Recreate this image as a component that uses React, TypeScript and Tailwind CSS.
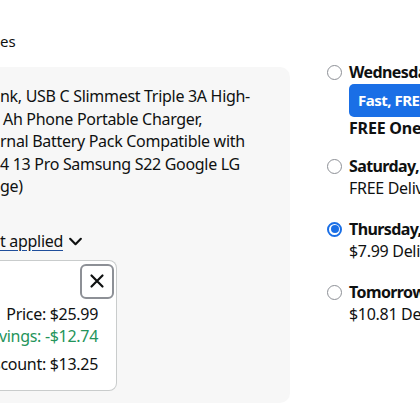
import React from "react";

const font = { fontFamily: '"Noto Sans", "Open Sans", Arial, sans-serif' };

function Radio({ checked }: { checked?: boolean }) {
  return checked ? (
    <span className="flex h-[15px] w-[15px] shrink-0 items-center justify-center rounded-full border-[2px] border-[#1a6fe6] bg-white">
      <span className="h-[8px] w-[8px] rounded-full bg-[#1a6fe6]" />
    </span>
  ) : (
    <span className="h-[15px] w-[15px] shrink-0 rounded-full border-[1.5px] border-[#8d9096] bg-white" />
  );
}

function Option({
  checked,
  title,
  children,
}: {
  checked?: boolean;
  title: string;
  children: React.ReactNode;
}) {
  return (
    <div className="flex gap-[7px]">
      <div className="flex h-[22px] items-center">
        <Radio checked={checked} />
      </div>
      <div className="flex flex-col whitespace-nowrap tracking-[-0.3px]">
        <div className="text-[16px] font-bold leading-[22px] tracking-[-0.6px]">{title}</div>
        {children}
      </div>
    </div>
  );
}

export default function App() {
  return (
    <div
      className="flex h-[420px] w-[420px] overflow-hidden bg-white text-[#0f1111]"
      style={font}
    >
      {/* left column */}
      <div className="flex w-[290px] shrink-0 flex-col pt-[30px]">
        <div className="text-[15px] leading-[22px]">es</div>
        <div className="mt-[15px] flex h-[336px] flex-col rounded-r-[10px] bg-[#f7f7f7] pt-[18px]">
          <div className="whitespace-nowrap text-[16px] leading-[22.5px] tracking-[-0.3px]">
            <div>nk, USB C Slimmest Triple 3A High-</div>
            <div className="pl-[3px]">Ah Phone Portable Charger,</div>
            <div>rnal Battery Pack Compatible with</div>
            <div>4 13 Pro Samsung S22 Google LG</div>
            <div>ge)</div>
          </div>
          <div className="mt-[32px] flex items-center gap-[5px] text-[16px] leading-[22px] tracking-[-0.3px]">
            <span className="underline decoration-[#1f4e9c] underline-offset-[3px]">
              t applied{" "}
            </span>
            <svg width="15" height="15" viewBox="0 0 14 14" className="mt-[2px]">
              <path
                d="M2 4.5 L7 9.5 L12 4.5"
                fill="none"
                stroke="#0f1111"
                strokeWidth="2"
                strokeLinecap="round"
                strokeLinejoin="round"
              />
            </svg>
          </div>
          <div className="mt-[8px] flex h-[131px] w-[117px] flex-col items-end rounded-r-[8px] border border-l-0 border-[#c9cccc] bg-white pr-[18px] pt-[3px]">
            <button className="-mr-[16px] flex h-[35px] w-[34px] items-center justify-center rounded-[6px] border-[2px] border-[#8d9096] bg-white">
              <svg width="16" height="16" viewBox="0 0 16 16">
                <path
                  d="M2.5 2.5 L13.5 13.5 M13.5 2.5 L2.5 13.5"
                  stroke="#0f1111"
                  strokeWidth="2.2"
                  strokeLinecap="round"
                />
              </svg>
            </button>
            <div className="mt-[4px] whitespace-nowrap text-right text-[16px] leading-[22px] tracking-[-0.3px]">
              <div>Price: $25.99</div>
              <div className="text-[#23945a]">Savings: -$12.74</div>
              <div className="mt-[6px]">Discount: $13.25</div>
            </div>
          </div>
        </div>
      </div>

      {/* right column */}
      <div className="ml-[37px] flex flex-col gap-[19px] pt-[61px]">
        <div className="-mb-[3px]">
          <Option title="Wednesday, March 29">
            <div className="mt-[1px] flex h-[33px] items-center rounded-[5px] bg-[#1a6fe6] pl-[9px] pr-[10px] text-[15px] font-bold tracking-[-0.5px] text-white">
              Fast, FREE Delivery
            </div>
            <div className="text-[16px] font-bold leading-[22px] tracking-[-0.2px]">FREE One-Day</div>
          </Option>
        </div>
        <Option title="Saturday, April 1">
          <div className="text-[16px] leading-[22px]">FREE Delivery</div>
        </Option>
        <Option checked title="Thursday, March 30">
          <div className="text-[16px] leading-[22px]">$7.99 Delivery</div>
        </Option>
        <Option title="Tomorrow, March 28">
          <div className="text-[16px] leading-[22px]">$10.81 Delivery</div>
        </Option>
      </div>
    </div>
  );
}
